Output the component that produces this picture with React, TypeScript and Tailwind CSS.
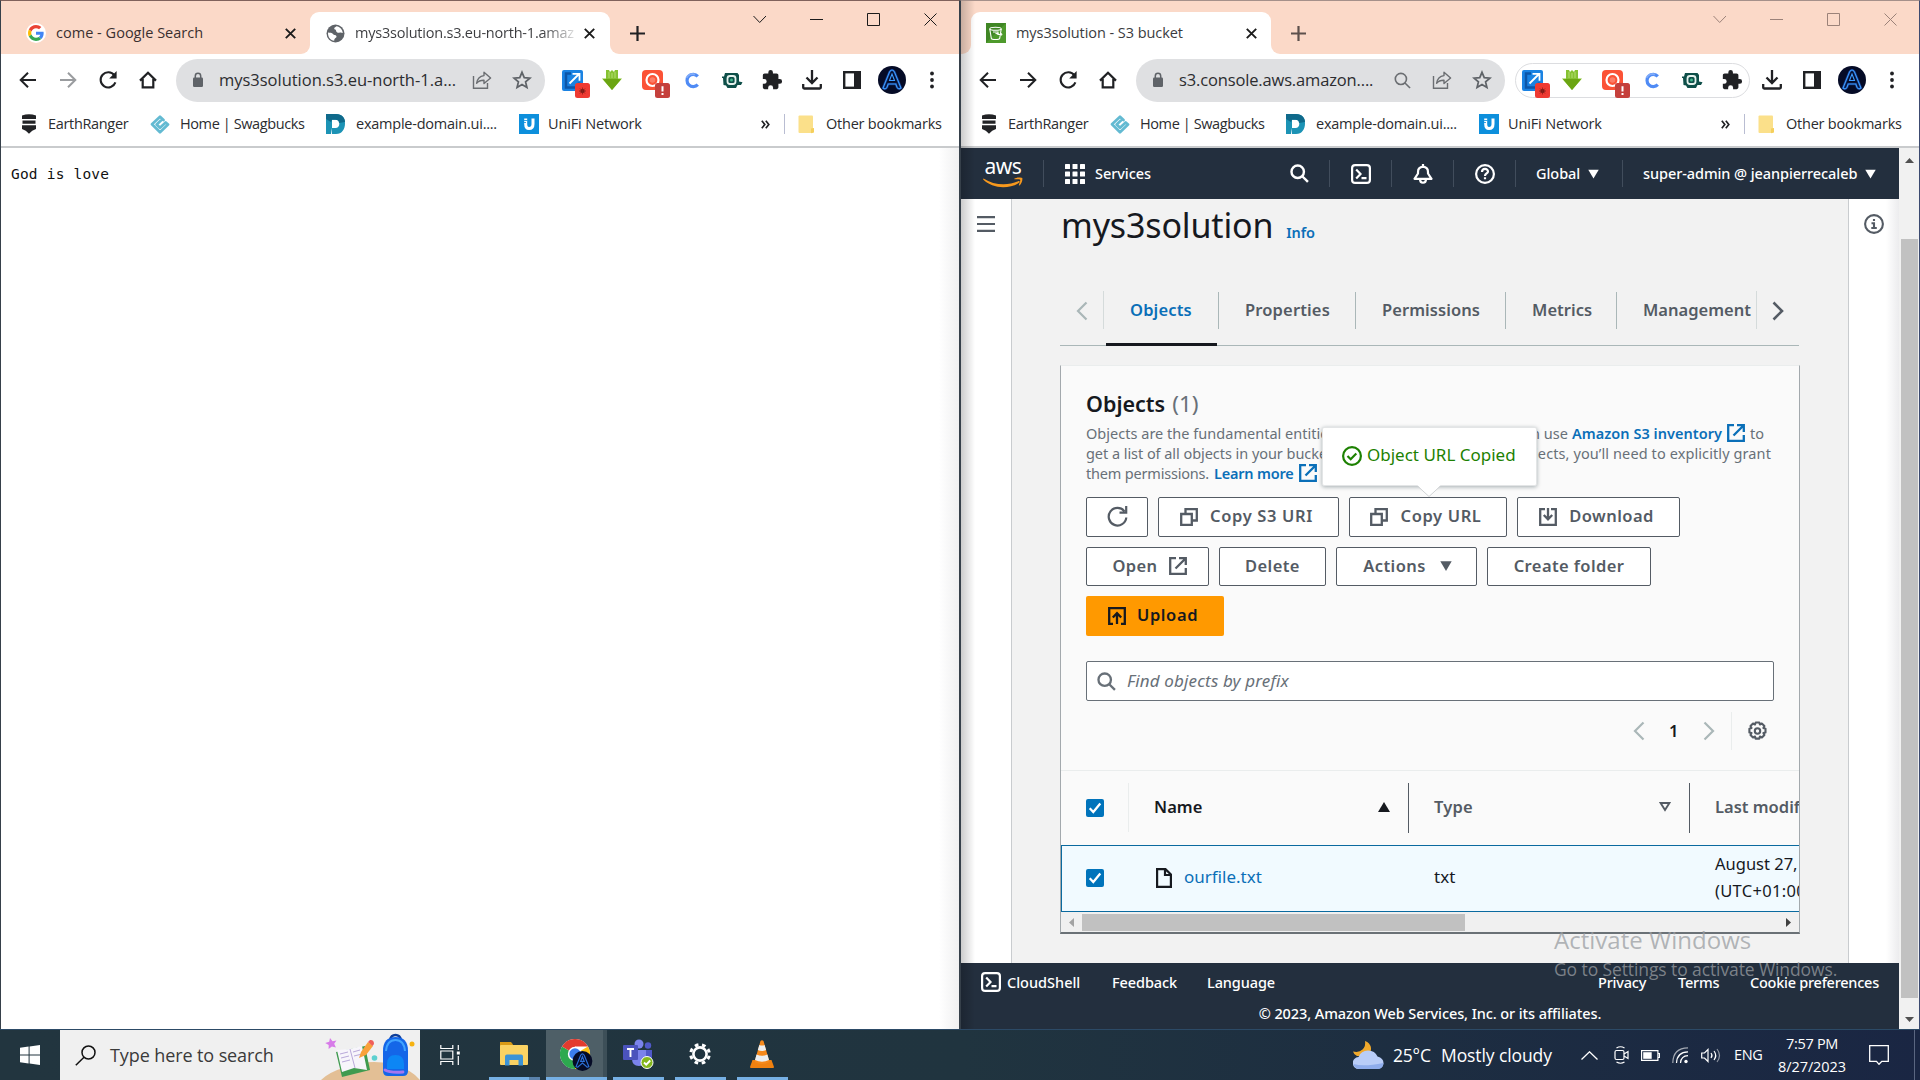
import React from 'react';

type P = { className?: string };

/* ---------- Browser icons ---------- */
const Arrow = ({ className = '', flip = false }: P & { flip?: boolean }) => (
  <svg width="18" height="18" viewBox="0 0 18 18" className={`${className} ${flip ? 'rotate-180' : ''}`} fill="none" stroke="currentColor" strokeWidth="2">
    <path d="M17 9H2M9 1.7 1.7 9 9 16.3" />
  </svg>
);
const Reload = () => (
  <svg width="20" height="20" viewBox="0 0 20 20" fill="none" stroke="#202124" strokeWidth="2.1">
    <path d="M16.4 5.4A7.6 7.6 0 1 0 17.4 12.4" />
    <path d="M18.6 1v7.4h-7.4z" fill="#202124" stroke="none" />
  </svg>
);
const Home = () => (
  <svg width="18" height="18" viewBox="0 0 18 18" fill="none" stroke="#202124" strokeWidth="2.2">
    <path d="M1 9.6 9 1.8l8 7.8M3.7 8v8.4h10.6V8" />
  </svg>
);
const Lock = () => (
  <svg width="12" height="16" viewBox="0 0 12 16">
    <rect x="1" y="5.5" width="10" height="9.5" rx="1.2" fill="#5f6368" />
    <path d="M3.3 6V4a2.7 2.7 0 0 1 5.4 0v2" fill="none" stroke="#5f6368" strokeWidth="1.5" />
  </svg>
);
const Share = () => (
  <svg width="20" height="20" viewBox="0 0 20 20" fill="none" stroke="#6b6e72" strokeWidth="1.4">
    <path d="M1.5 6v12.3h14V13" />
    <path d="M12 2.2 18.6 8 12 13.5v-3.3c-3.5-.1-5.7.9-7.4 3.1.6-4.2 3-7.1 7.4-7.7z" strokeLinejoin="round" />
  </svg>
);
const Star = () => (
  <svg width="20" height="20" viewBox="0 0 24 24" fill="none" stroke="#5f6368" strokeWidth="2.1">
    <path d="m12 2.800 2.700 6.300 6.800.6-5.200 4.500 1.600 6.700L12 17.300l-5.900 3.600 1.600-6.700L2.500 9.700l6.800-.6z" />
  </svg>
);
const Magnifier = ({ size, color, sw }: { size: number; color: string; sw: number }) => (
  <svg width={size} height={size} viewBox="0 0 18 18" fill="none" stroke={color} strokeWidth={sw}>
    <circle cx="7.3" cy="7.3" r="5.9" />
    <path d="m11.600 11.600 5.400 5.400" />
  </svg>
);
const ExtCapture = () => (
  <svg width="28" height="28" viewBox="0 0 28 28">
    <rect width="21" height="21" rx="2" fill="#1a82e2" />
    <path d="M9 3.500H4v14h13v-5" fill="none" stroke="#0d56a8" strokeWidth="2.5" />
    <path d="M7.500 13.500 16.500 4.500M10.500 3.800h7v7" fill="none" stroke="#fff" strokeWidth="1.8" />
    <rect x="13" y="13" width="15" height="15" rx="2.5" fill="#ee3a32" />
    <circle cx="20.5" cy="21" r="2" fill="#6a1512" />
    <path d="M17 21h7M20.500 17.500v7M18 18.500l5 5M23 18.500l-5 5" stroke="#8b1f1a" strokeWidth=".8" />
  </svg>
);
const ExtGreen = () => (
  <svg width="20" height="20" viewBox="0 0 20 20">
    <path d="M4 0h3l1 2 2-2 2 2 1-2h3v8.500h4L10 20 0 8.500h4z" fill="#86c232" />
    <path d="M4 9h12l3 .2L10 20 1 9.200z" fill="#6ba512" />
    <path d="M7 2v6M10 3v5M13 2v6" stroke="#b3dc72" strokeWidth="1" />
  </svg>
);
const ExtRed = () => (
  <svg width="28" height="28" viewBox="0 0 28 28">
    <rect width="21" height="20" rx="4" fill="#fb5236" />
    <circle cx="10.5" cy="10" r="6" fill="none" stroke="#fff" strokeWidth="2.2" />
    <circle cx="10.5" cy="10" r="2.8" fill="#fff" opacity=".25" />
    <rect x="13" y="13" width="15" height="15" rx="2.5" fill="#c5403c" />
    <path d="M20.500 16.300v5.200M20.500 23v2" stroke="#fff" strokeWidth="2" />
  </svg>
);
const ExtC = () => (
  <svg width="16" height="17" viewBox="0 0 16 17" fill="none" strokeWidth="3.2">
    <path d="M13.800 4.300A6.200 6.200 0 1 0 13.800 12.700" stroke="#4f8bf5" />
    <path d="M11 2.600A6.200 6.200 0 0 0 2.500 6" stroke="#7faaf8" strokeWidth="2" />
  </svg>
);
const ExtTeal = () => (
  <svg width="21" height="17" viewBox="0 0 21 17">
    <path d="M3 1h12.500l1.500 2v6.500l3.500.8L19 13h-3.500L14 16H5.500L4 13.500 1.500 13 1 6H0V4.500h2z" fill="#0e4f49" />
    <rect x="5.500" y="4" width="8" height="8" rx="2.5" fill="none" stroke="#e6f3ee" strokeWidth="1.8" />
    <circle cx="9.5" cy="8" r="1.5" fill="#3fb68b" />
  </svg>
);
const Puzzle = () => (
  <svg width="22" height="22" viewBox="0 0 24 24" fill="#202124">
    <path d="M20.500 11H19V7c0-1.100-.9-2-2-2h-4V3.500a2.500 2.500 0 0 0-5 0V5H4c-1.100 0-2 .9-2 2v3.800h1.500a2.700 2.700 0 0 1 0 5.400H2V20c0 1.100.9 2 2 2h3.800v-1.500a2.700 2.700 0 0 1 5.400 0V22H17c1.100 0 2-.9 2-2v-4h1.500a2.500 2.500 0 0 0 0-5z" />
  </svg>
);
const DownloadTray = () => (
  <svg width="20" height="20" viewBox="0 0 20 20" fill="none" stroke="#202124" strokeWidth="2.3">
    <path d="M10 0v12.500M4.500 7.500 10 13l5.500-5.500M1.200 14v3.500c0 .6.4 1 1 1h15.600c.6 0 1-.4 1-1V14" />
  </svg>
);
const SidePanel = () => (
  <svg width="18" height="18" viewBox="0 0 18 18">
    <rect x="1.2" y="1.2" width="15.6" height="15.6" fill="#fff" stroke="#202124" strokeWidth="2.4" />
    <rect x="11" y="1" width="6" height="16" fill="#202124" />
  </svg>
);
const Avatar = ({ size }: { size: number }) => (
  <svg width={size} height={size} viewBox="0 0 28 28">
    <circle cx="14" cy="14" r="14" fill="#050b26" />
    <path d="M5 22 11.500 6q2.500-4 5 0L23 22q-2.500 2-4-.8L17.800 18h-7.600L9 21.200Q7.500 24 5 22z" fill="none" stroke="#1747a8" strokeWidth="2.6" opacity=".6" />
    <path d="M5 22 11.500 6q2.500-4 5 0L23 22q-2.500 2-4-.8L17.800 18h-7.600L9 21.200Q7.500 24 5 22zM11.500 14.500h5L14 8z" fill="none" stroke="#3d9bff" strokeWidth="1.1" />
  </svg>
);
const Dots = () => (
  <svg width="4" height="18" viewBox="0 0 4 18" fill="#202124">
    <circle cx="2" cy="2.5" r="1.9" />
    <circle cx="2" cy="9" r="1.9" />
    <circle cx="2" cy="15.5" r="1.9" />
  </svg>
);
const Cross = () => (
  <svg width="11" height="11" viewBox="0 0 11 11" stroke="#1b1b1b" strokeWidth="1.9" className="shrink-0">
    <path d="m.8.8 9.400 9.400M10.200.8.8 10.200" />
  </svg>
);
const Plus = ({ color }: { color: string }) => (
  <svg width="15" height="15" viewBox="0 0 15 15" stroke={color} strokeWidth="2.2">
    <path d="M7.500 0v15M0 7.500h15" />
  </svg>
);
const GoogleG = () => (
  <span className="flex h-5 w-5 shrink-0 items-center justify-center rounded-full bg-white">
    <svg width="16" height="16" viewBox="0 0 48 48">
      <path fill="#EA4335" d="M24 9.500c3.540 0 6.710 1.220 9.210 3.600l6.850-6.850C35.900 2.380 30.470 0 24 0 14.620 0 6.510 5.380 2.560 13.220l7.980 6.190C12.430 13.720 17.740 9.500 24 9.500z" />
      <path fill="#4285F4" d="M46.980 24.550c0-1.570-.15-3.090-.38-4.550H24v9.020h12.940c-.58 2.960-2.260 5.480-4.780 7.180l7.730 6c4.510-4.180 7.090-10.360 7.090-17.650z" />
      <path fill="#FBBC05" d="M10.530 28.590c-.48-1.450-.76-2.990-.76-4.590s.27-3.140.76-4.590l-7.980-6.190C.92 16.460 0 20.120 0 24c0 3.880.92 7.540 2.560 10.780l7.970-6.190z" />
      <path fill="#34A853" d="M24 48c6.480 0 11.930-2.130 15.890-5.810l-7.730-6c-2.150 1.450-4.920 2.300-8.160 2.300-6.260 0-11.570-4.220-13.470-9.910l-7.980 6.190C6.510 42.620 14.620 48 24 48z" />
    </svg>
  </span>
);
const Globe = () => (
  <svg width="19" height="19" viewBox="0 0 19 19" className="shrink-0">
    <circle cx="9.5" cy="9.5" r="9" fill="#5f6368" />
    <path d="M2 8.500c2 .2 4 .2 5 1.500.9 1.300 3.400.8 3.500 2.500.1 1.500-2.200 1.300-2.300 4.300C4.500 16.300 1.800 13.500 2 8.500z" fill="#fff" />
    <path d="M10.500 2.200c-.7.8-2.300.9-2.300 2.200 0 1.300 1.800.8 1.800 2 0 1.500 2 2.600 3.200 2.300 1.500-.4 2.500-.2 3.600.3-.3-3.600-2.800-6.300-6.300-6.800z" fill="#fff" />
  </svg>
);
const BucketIcon = () => (
  <svg width="20" height="20" viewBox="0 0 20 20" className="shrink-0">
    <rect width="20" height="20" fill="#3f8624" />
    <path d="M0 20 20 0v20z" fill="#4e9a2c" />
    <g fill="none" stroke="#fff" strokeWidth="1.1">
      <ellipse cx="9.5" cy="5.7" rx="5.7" ry="1.5" />
      <path d="m3.800 6 1.500 9.300c.3 1.600 8.100 1.600 8.400 0L15.200 6M9.500 10.200l5.500 1.800c1 .3 1.300-1 0-1.500M7 9h5v3" />
    </g>
  </svg>
);

/* ---------- Bookmark icons ---------- */
const RangerIcon = () => (
  <svg width="16" height="20" viewBox="0 0 16 20" fill="#222326">
    <path d="M1 1.500Q8-.8 15 1.500V5H1zM1.500 6.500h13v3.300h-13zM1 11.300h14V15q-4 1-7 4.800Q5 16 1 15z" />
  </svg>
);
const SwagIcon = () => (
  <svg width="20" height="19" viewBox="0 0 20 19" fill="none" stroke="#63bad2" strokeWidth="2.7" strokeLinejoin="round" strokeLinecap="round">
    <path d="M13.500 5 10 1.700 2 9.200l8 8 8-7.700-2.300-2-5.700 5.300-3.300-3.300 5-4.700" />
  </svg>
);
const DIcon = () => (
  <svg width="19" height="20" viewBox="0 0 19 20">
    <path d="M0 0h10c6 0 9 4 9 9.500S16 20 10 20H6v-6h3.500c2.500 0 3.800-1.500 3.800-4.200S12 5.800 9.500 5.800H6V14l-1 6H0z" fill="#1c93b5" />
    <path d="M0 0h10c6 0 9 4 9 8l-6 1c0-2-1.300-3.200-3.500-3.200H6L5 8 0 5z" fill="#0f6a8b" />
  </svg>
);
const UIcon = () => (
  <svg width="20" height="20" viewBox="0 0 20 20">
    <rect width="20" height="20" fill="#0d8fdc" />
    <path d="M6.700 4.500V10c0 3 1 4.500 3.300 4.500s4-1.300 4-4.500V4.500" fill="none" stroke="#fff" strokeWidth="3" />
    <path d="M4.500 6.500h4M4.500 8.500h2.500" stroke="#0d8fdc" strokeWidth=".8" />
  </svg>
);
const FolderNote = () => (
  <svg width="17" height="19" viewBox="0 0 17 19">
    <rect x=".5" y=".5" width="14.5" height="17.5" rx="1" fill="#fbe08a" />
    <path d="M13 13.500 16 13v4.500l-3 .8z" fill="#f5cf5c" />
  </svg>
);

const Cell = ({ children }: { children?: React.ReactNode }) => (
  <div className="flex h-10 w-10 shrink-0 items-center justify-center">{children}</div>
);

const WindowControls = ({ color }: { color: string }) => (
  <div className="flex h-[37px] shrink-0 self-start">
    {['m.5 3 6.200 6.500L13 3', 'M0 6.500h13', 'M.5.5h12v12H.5z', 'm.5.5 12 12M12.500.5l-12 12'].map((d, i) => (
      <div key={i} className="flex h-full w-[57px] items-center justify-center">
        <svg width="13" height="13" viewBox="0 0 13 13" fill="none" stroke={color} strokeWidth="1">
          <path d={d} />
        </svg>
      </div>
    ))}
  </div>
);

const CurveLeft = ({ w }: { w: string }) => (
  <div className={`h-[9px] shrink-0 bg-white ${w}`}>
    <div className="h-full w-full rounded-br-[9px] bg-[#fbd9c8]" />
  </div>
);
const CurveRight = () => (
  <div className="h-[9px] w-[9px] shrink-0 bg-white">
    <div className="h-full w-full rounded-bl-[9px] bg-[#fbd9c8]" />
  </div>
);

function Toolbar({ url, urlClass, grouped = false, canForward = false }: { url: string; urlClass: string; grouped?: boolean; canForward?: boolean }) {
  return (
    <div className="flex h-[53px] items-center bg-white pb-px pl-[7px]">
      <Cell><Arrow className="text-[#202124]" /></Cell>
      <Cell><Arrow flip className={canForward ? 'text-[#202124]' : 'text-[#9a9c9f]'} /></Cell>
      <Cell><Reload /></Cell>
      <Cell><Home /></Cell>
      <div className="ml-[8px] flex h-[43px] w-[369px] shrink-0 items-center rounded-full bg-[#dfe0e2] pl-4 pr-[3px]">
        <Lock />
        <span className={`ml-[15px] flex-1 whitespace-nowrap text-[16.500px] text-[#2c2d30] ${urlClass}`}>{url}</span>
        {grouped && <Cell><Magnifier size={17} color="#6b6e72" sw={1.7} /></Cell>}
        <Cell><Share /></Cell>
        <Cell><Star /></Cell>
      </div>
      <div className="relative ml-[7px] flex shrink-0">
        {grouped && <div className="absolute left-[3px] top-[3px] h-[35px] w-[235px] rounded-full border border-[#dcdde0]" />}
        <Cell><span className="relative left-[4px] top-[4px]"><ExtCapture /></span></Cell>
        <Cell><ExtGreen /></Cell>
        <Cell><span className="relative left-[4px] top-[4px]"><ExtRed /></span></Cell>
        <Cell><ExtC /></Cell>
        <Cell><ExtTeal /></Cell>
        <Cell><Puzzle /></Cell>
      </div>
      <Cell><DownloadTray /></Cell>
      <Cell><SidePanel /></Cell>
      <Cell><Avatar size={28} /></Cell>
      <Cell><Dots /></Cell>
    </div>
  );
}

function Bookmarks() {
  return (
    <div className="h-[41px] border-b-2 border-[#c9cbcd] bg-white">
      <div className="flex h-[34px] items-center whitespace-nowrap pl-5 text-[14.500px] text-[#2b2c2f]">
        <RangerIcon />
        <span className="ml-[11px] w-[102px] tracking-[-0.33px]">EarthRanger</span>
        <SwagIcon />
        <span className="ml-[10px] w-[146px] tracking-[-0.4px]">Home | Swagbucks</span>
        <DIcon />
        <span className="ml-[11px] w-[163px] tracking-[-0.23px]">example-domain.ui....</span>
        <UIcon />
        <span className="ml-[9px] w-[213px] tracking-[-0.15px]">UniFi Network</span>
        <svg width="9" height="9" viewBox="0 0 9 9" fill="none" stroke="#202124" strokeWidth="1.7">
          <path d="m.8.8 3 3.700-3 3.700M4.800.8l3 3.700-3 3.700" />
        </svg>
        <div className="ml-[14px] h-5 w-px bg-[#b9bdd2]" />
        <span className="ml-[13px]"><FolderNote /></span>
        <span className="ml-[11px] tracking-[-0.22px]">Other bookmarks</span>
      </div>
    </div>
  );
}

function TextWindow() {
  return (
    <section className="flex h-[1029px] w-[960px] shrink-0 flex-col border-l border-r border-t border-l-[#36404a] border-r-[#36404a] border-t-[#80625c] bg-white">
      <div className="flex h-[53px] items-end bg-[#fbd9c8]">
        <div className="flex h-[42px] w-[300px] shrink-0 items-center pl-[25px] pr-[5px]">
          <GoogleG />
          <span className="ml-[10px] flex-1 whitespace-nowrap text-[14.500px] text-[#3a3030] tracking-[0.02px]">come - Google Search</span>
          <Cross />
        </div>
        <CurveLeft w="w-[9px]" />
        <div className="flex h-[42px] w-[300px] shrink-0 items-center rounded-t-[9px] bg-white pl-4 pr-[15px]">
          <Globe />
          <span className="ml-[10px] w-[220px] overflow-hidden whitespace-nowrap bg-gradient-to-r from-[#3a3b3e] from-85% to-[#e4e4e4] bg-clip-text text-[14.500px] text-transparent tracking-[-0.22px]">mys3solution.s3.eu-north-1.amaz</span>
          <span className="ml-auto"><Cross /></span>
        </div>
        <CurveRight />
        <div className="flex h-[42px] flex-1 items-center pl-[11px]"><Plus color="#202124" /></div>
        <WindowControls color="#1b1b1b" />
      </div>
      <Toolbar url="mys3solution.s3.eu-north-1.a..." urlClass="tracking-[-0.02px]" />
      <Bookmarks />
      <div className="flex flex-1 justify-between">
        <pre className="pl-[10px] pt-[15px] font-['DejaVu_Sans_Mono',monospace] text-[14.500px] leading-[22px] tracking-[0.2px] text-[#111]">God is love</pre>
        <div className="w-5 bg-gradient-to-l from-[#f0f0f1] to-white" />
      </div>
    </section>
  );
}

/* ---------- AWS console ---------- */
const CloudShellIcon = () => (
  <svg width="20" height="20" viewBox="0 0 20 20" fill="none" stroke="#fff" strokeWidth="2.2">
    <rect x="1.1" y="1.1" width="17.8" height="17.8" rx="3" />
    <path d="m5.200 5.500 4.300 4.500-4.300 4.500M10.500 14.200h5" />
  </svg>
);
const External = ({ color }: { color: string }) => (
  <svg width="18" height="18" viewBox="0 0 18 18" fill="none" stroke={color} strokeWidth="2.3" className="shrink-0">
    <path d="M7 1.200H1.200v15.600h15.600V11M10 1.200h6.800V8M16.500 1.500l-10 10" />
  </svg>
);
const CopyIcon = () => (
  <svg width="18" height="18" viewBox="0 0 18 18" fill="none" stroke="#545b64" strokeWidth="2.3" className="shrink-0">
    <path d="M1.200 6h10.600v10.800H1.200z" />
    <path d="M5.500 6V1.200h11.300v11.300H12" />
  </svg>
);
const Caret = ({ color, w = 12 }: { color: string; w?: number }) => (
  <svg width={w} height="10" viewBox="0 0 12 10" fill={color}><path d="M.3.3h11.400L6 10z" /></svg>
);
const Chevron = ({ color, flip = false, sw = 2.2 }: { color: string; flip?: boolean; sw?: number }) => (
  <svg width="12" height="20" viewBox="0 0 12 20" fill="none" stroke={color} strokeWidth={sw} className={flip ? 'rotate-180' : ''}>
    <path d="m1.500 1.500 8.500 8.500-8.500 8.500" />
  </svg>
);
const Checkbox = () => (
  <svg width="18" height="18" viewBox="0 0 18 18" className="shrink-0">
    <rect width="18" height="18" rx="2" fill="#0073bb" />
    <path d="m3.700 9.300 3.600 3.700 7-8.500" fill="none" stroke="#fff" strokeWidth="2.3" />
  </svg>
);

const Btn = ({ w, h = 'h-10', pad = '', children }: { w: string; h?: string; pad?: string; children: React.ReactNode }) => (
  <button className={`flex shrink-0 items-center justify-center whitespace-nowrap rounded-[2px] border border-[#545b64] bg-white pb-px text-[16.500px] font-semibold text-[#545b64] ${w} ${h} ${pad}`}>
    {children}
  </button>
);

function AwsNav() {
  return (
    <nav className="flex h-[51px] shrink-0 items-center whitespace-nowrap bg-[#232f3e] text-[14.500px] font-medium text-white">
      <div className="flex h-[27px] w-[83px] items-center border-r border-[#414d5c] pl-[22px]">
        <div className="flex w-10 flex-col items-center">
          <span className="h-[17px] text-[21px] font-normal leading-[13px] tracking-[-0.5px]">aws</span>
          <svg width="40" height="11" viewBox="0 0 40 11">
            <path d="M.5 1.500C11 8.500 25 8.800 35 4.300c1.500-.7 2.500.5 1 1.500C26 12.500 9 11.800 0 2.300z" fill="#f7981d" />
            <path d="M31.500 1.600C34 0 38 .2 39.300.9 39.800 3 38.500 6.800 36.500 8.400c-.5.300-.8 0-.6-.5.800-1.900 1.700-4.500 1.200-5.200-.6-.7-3.300-.6-5-.4-.8.1-1-.4-.6-.7z" fill="#f7981d" />
          </svg>
        </div>
      </div>
      <svg width="20" height="20" viewBox="0 0 20 20" fill="#fff" className="ml-[21px]">
        {[0, 7.5, 15].map((y) => [0, 7.5, 15].map((x) => <rect key={`${x}-${y}`} x={x} y={y} width="5" height="5" rx=".5" />))}
      </svg>
      <span className="ml-[10px] tracking-[-0.05px]">Services</span>
      <div className="ml-auto flex h-[27px] items-center">
        <div className="flex h-full w-[62px] items-center justify-center border-r border-[#414d5c] pl-px"><Magnifier size={19} color="#fff" sw={2.3} /></div>
        <div className="flex h-full w-[62px] items-center justify-center border-r border-[#414d5c]"><CloudShellIcon /></div>
        <div className="flex h-full w-[62px] items-center justify-center border-r border-[#414d5c]">
          <svg width="20" height="20" viewBox="0 0 20 20" fill="none" stroke="#fff" strokeWidth="2.2">
            <path d="M1.500 14.800 5 9.500V8q0-4.800 5-5.300Q15 3.200 15 8v1.500l3.500 5.300z" strokeLinejoin="round" />
            <path d="M10 0v3M7 15c0 5 6 5 6 0" />
          </svg>
        </div>
        <div className="flex h-full w-[62px] items-center justify-center border-r border-[#414d5c]">
          <svg width="20" height="20" viewBox="0 0 20 20" fill="none" stroke="#fff" strokeWidth="2.2">
            <circle cx="10" cy="10" r="8.9" />
            <path d="M7 8c0-4 6-4 6-.5 0 2-3 2-3 4.500M10 13.300v2" />
          </svg>
        </div>
        <div className="flex h-full w-[107px] items-center border-r border-[#414d5c] pl-[20px]">
          <span className="w-[52px] tracking-[-0.05px]">Global</span><Caret color="#fff" w={11} />
        </div>
        <div className="flex h-full w-[276px] items-center pl-[20px]">
          <span className="w-[222px] tracking-[-0.08px]">super-admin @ jeanpierrecaleb</span><Caret color="#fff" w={11} />
        </div>
      </div>
    </nav>
  );
}

function Tabs() {
  return (
    <div className="mt-[25px] flex h-[71px] w-[739px] items-center border-b border-[#aab7b8] text-[16.500px] font-semibold text-[#545b64]">
      <div className="flex h-[38px] w-[44px] items-center border-r border-[#d5dbdb] pl-[16px] pt-px"><Chevron color="#aab7b8" flip /></div>
      <div className="relative flex h-[70px] w-[114px] items-center">
        <span className="ml-[26px] tracking-[0.15px] text-[#0a6fb8]">Objects</span>
        <span className="absolute -bottom-px left-[2px] h-[3px] w-[111px] bg-[#16191f]" />
      </div>
      <div className="flex h-[37px] w-[138px] items-center border-l border-r border-[#aab7b8] pl-[26px] tracking-[0.15px]">Properties</div>
      <div className="flex h-[37px] w-[150px] items-center border-r border-[#aab7b8] pl-[26px] tracking-[0.07px]">Permissions</div>
      <div className="flex h-[37px] w-[111px] items-center border-r border-[#aab7b8] pl-[26px] tracking-[0.05px]">Metrics</div>
      <div className="flex h-[37px] w-[139px] items-center pl-[26px]">Management</div>
      <div className="flex h-[38px] flex-1 items-center border-l border-[#d5dbdb] pl-[15px] pt-px"><Chevron color="#545b64" sw={2.6} /></div>
    </div>
  );
}

function ObjectsPanel() {
  return (
    <div className="mt-[19px] flex h-[569px] w-[740px] flex-col border border-b-2 border-[#a3a9ad] border-t-[#eaeded] border-b-[#6a7176] bg-[#fafafa]">
      <div className="flex flex-col pl-[25px] pr-[25px]">
        <h2 className="mt-[23px] flex h-[30px] items-baseline whitespace-nowrap text-[21.500px] font-semibold leading-[30px] text-[#16191f]">
          Objects<span className="ml-[7px] text-[22.500px] font-normal text-[#687078]">(1)</span>
        </h2>
        <div className="mt-[4px] whitespace-nowrap text-[14.500px] leading-5 text-[#687078]">
          <div className="flex h-5 items-center">
            <span className="w-[486px] tracking-[0.02px]">Objects are the fundamental entities stored in Amazon S3. You can use</span>
            <span className="mr-[5px] font-semibold tracking-[0.04px] text-[#0a6fb8]">Amazon S3 inventory</span>
            <External color="#0a6fb8" />
            <span className="ml-[5px]">to</span>
          </div>
          <div className="flex h-5 items-center justify-between">
            <span className="tracking-[-0.05px]">get a list of all objects in your bucket. For others to access your</span>
            <span className="mr-[3px] tracking-[0.1px]">objects, you’ll need to explicitly grant</span>
          </div>
          <div className="flex h-5 items-center">
            <span className="w-[128px] tracking-[-0.19px]">them permissions.</span>
            <span className="mr-[5px] font-semibold tracking-[-0.2px] text-[#0a6fb8]">Learn more</span>
            <External color="#0a6fb8" />
          </div>
        </div>
        <div className="relative mt-[14px] flex gap-[10px]">
          <Btn w="w-[62px]">
            <svg width="21" height="21" viewBox="0 0 21 21" fill="none" stroke="#545b64" strokeWidth="2.2"><path d="M17.500 5.300A8.800 8.800 0 1 0 19.300 11.500M19.200 0v6.700h-6.700" /></svg>
          </Btn>
          <Btn w="w-[181px]" pad="pr-[4px]"><CopyIcon /><span className="ml-3 tracking-[0.65px]">Copy S3 URI</span></Btn>
          <Btn w="w-[158px]" pad="pr-[4px]"><CopyIcon /><span className="ml-3 tracking-[0.63px]">Copy URL</span></Btn>
          <Btn w="w-[163px]" pad="pr-[4px]">
            <svg width="18" height="18" viewBox="0 0 18 18" fill="none" stroke="#545b64" strokeWidth="2.3"><path d="M6 1.200H1.200v15.600h15.600V1.200H12M9 0v11M4.800 7 9 11.300 13.200 7" /></svg>
            <span className="ml-3 tracking-[0.45px]">Download</span>
          </Btn>
          <div className="absolute -top-[70px] left-[236px] z-10 flex h-[59px] w-[215px] items-center rounded-[2px] border border-[#e3e5e6] bg-white pb-[3px] pl-[19px] text-[17px] text-[#1d8102] shadow-[0_1px_4px_rgba(0,28,36,0.35)]">
            <svg width="20" height="20" viewBox="0 0 20 20" fill="none" stroke="#1d8102" strokeWidth="2.2" className="relative top-px"><circle cx="10" cy="10" r="8.9" /><path d="m5.500 10 3.200 3.200L14.300 7.500" /></svg>
            <span className="ml-[5px] whitespace-nowrap">Object URL Copied</span>
            <svg width="24" height="12" viewBox="0 0 24 12" className="absolute left-[94px] top-[57px]"><path d="M0 0h24L12 11.300z" fill="#fff" /><path d="m.5 1 11.500 10.500L23.500 1" fill="none" stroke="#d0d3d5" /></svg>
          </div>
        </div>
        <div className="mt-[10px] flex gap-[10px]">
          <Btn w="w-[123px]" h="h-[39px]" pad="pl-[4px]"><span className="mr-[11px] tracking-[0.4px]">Open</span><External color="#545b64" /></Btn>
          <Btn w="w-[107px]" h="h-[39px]"><span className="tracking-[0.4px]">Delete</span></Btn>
          <Btn w="w-[141px]" h="h-[39px]" pad="pl-[2px]"><span className="mr-[14px] tracking-[0.4px]">Actions</span><Caret color="#545b64" /></Btn>
          <Btn w="w-[164px]" h="h-[39px]"><span className="tracking-[0.4px]">Create folder</span></Btn>
        </div>
        <button className="mt-[10px] flex h-10 w-[138px] items-center rounded-[2px] bg-[#ff9900] pb-px pl-[22px] text-[16.500px] font-semibold text-[#16191f]">
          <svg width="18" height="18" viewBox="0 0 18 18" fill="none" stroke="#16191f" strokeWidth="2.3"><path d="M5 16.800H1.200V1.200h15.600v15.600H13M9 17V6.500M4.800 10.500 9 6.200l4.200 4.300" /></svg>
          <span className="ml-[11px] tracking-[0.6px]">Upload</span>
        </button>
        <div className="mt-[25px] flex h-10 w-[688px] items-center rounded-[2px] border border-[#687078] bg-white pl-[10px] text-[#687078]">
          <Magnifier size={19} color="#687078" sw={2.2} />
          <span className="ml-[11px] text-[17px] italic leading-5 tracking-[0.15px]">Find objects by prefix</span>
        </div>
        <div className="flex h-[60px] items-center justify-end">
          <Chevron color="#aab7b8" flip />
          <span className="ml-[24px] w-[34px] text-[16.500px] font-semibold leading-5 text-[#16191f]">1</span>
          <Chevron color="#aab7b8" />
          <div className="ml-4 h-[38px] w-px bg-[#eaeded]" />
          <svg width="21" height="21" viewBox="0 0 21 21" fill="none" stroke="#545b64" strokeWidth="2.1" className="ml-[15px] mr-[6px]">
            <path d="M8.700 1.500h3.600l.6 2 1.900-1 2.600 2.500-1 2 2.100.7v3.700l-2.100.6 1 2-2.500 2.500-2-1-.6 2.100H8.600l-.6-2.100-2 1-2.500-2.500 1-2-2.100-.6V7.700l2.100-.7-1-2L6 2.500l2 1z" strokeLinejoin="round" />
            <circle cx="10.5" cy="10" r="2.7" />
          </svg>
        </div>
      </div>
      <div className="mt-[9px] overflow-hidden whitespace-nowrap text-[16.500px]">
        <div className="flex h-[75px] w-[1000px] items-center border-t border-[#eaeded] pb-px font-semibold text-[#545b64]">
          <div className="flex h-[49px] w-[68px] items-center border-r border-[#eaeded] pl-[25px]"><Checkbox /></div>
          <div className="flex h-[50px] w-[280px] items-center justify-between border-r border-[#545b64] pb-px pl-[25px] pr-[18px] text-[#16191f]">
            <span className="tracking-[0.05px]">Name</span>
            <svg width="12" height="10" viewBox="0 0 12 10" fill="#16191f"><path d="M0 10h12L6 0z" /></svg>
          </div>
          <div className="flex h-[50px] w-[281px] items-center justify-between border-r border-[#545b64] pb-px pl-[25px] pr-[18px]">
            <span className="tracking-[0.2px]">Type</span>
            <svg width="12" height="10" viewBox="0 0 12 10" fill="none" stroke="#545b64" strokeWidth="1.9"><path d="M1.600 1h8.800L6 8z" /></svg>
          </div>
          <span className="pb-px pl-[25px]">Last modified</span>
        </div>
        <div className="flex h-[67px] w-[1000px] items-center border border-[#0a6a9f] bg-[#f1faff] text-[#16191f]">
          <div className="w-[92px] pb-px pl-6"><Checkbox /></div>
          <svg width="16" height="20" viewBox="0 0 16 20" fill="none" stroke="#16191f" strokeWidth="2.2" className="relative -top-px ml-[2px]"><path d="M1.100 1.100h8.400L14.900 6.500v12.400H1.100zM9 1v6h6" /></svg>
          <span className="ml-[12px] w-[250px] pb-[3px] text-[17px] text-[#0a6fb8]">ourfile.txt</span>
          <span className="w-[281px] pb-[3px] text-[17px]">txt</span>
          <span className="pb-[3px] leading-[27px]">August 27, 2023, 19:57:11<br /><span className="tracking-[0.3px]">(UTC+01:00)</span></span>
        </div>
      </div>
      <div className="flex h-5 items-center bg-[#f0f0f0] pl-2">
        <svg width="5" height="9" viewBox="0 0 5 9" fill="#a3a3a3"><path d="M5 0v9L0 4.500z" /></svg>
        <div className="ml-2 h-[17px] w-[383px] bg-[#c1c1c1]" />
        <svg width="5" height="9" viewBox="0 0 5 9" fill="#404040" className="ml-auto mr-2"><path d="M0 0v9l5-4.500z" /></svg>
      </div>
    </div>
  );
}

function AwsFooter() {
  return (
    <footer className="flex h-[66px] shrink-0 flex-col whitespace-nowrap bg-[#232f3e] text-[14.500px] font-medium text-white">
      <div className="flex h-[38px] items-center pl-5 pr-5">
        <CloudShellIcon />
        <span className="ml-[6px] w-[105px] pt-px">CloudShell</span>
        <span className="w-[95px] pt-px tracking-[-0.1px]">Feedback</span>
        <span className="pt-px tracking-[-0.1px]">Language</span>
        <span className="ml-auto w-[80px] pt-px tracking-[-0.2px]">Privacy</span>
        <span className="w-[72px] pt-px tracking-[-0.2px]">Terms</span>
        <span className="w-[129px] pt-px tracking-[-0.25px]">Cookie preferences</span>
      </div>
      <div className="h-6 text-center leading-6 tracking-[-0.09px]">© 2023, Amazon Web Services, Inc. or its affiliates.</div>
    </footer>
  );
}

function ConsoleWindow() {
  return (
    <section className="relative flex h-[1029px] w-[960px] shrink-0 flex-col border-l border-r border-t border-l-[#36404a] border-r-[#3c4a70] border-t-[#a5908a] bg-white">
      <div className="flex h-[53px] items-end bg-[#fbd9c8]">
        <CurveLeft w="w-[10px]" />
        <div className="flex h-[42px] w-[300px] shrink-0 items-center rounded-t-[9px] bg-white pl-[15px] pr-[14px]">
          <BucketIcon />
          <span className="ml-[10px] flex-1 whitespace-nowrap text-[14.500px] text-[#3a3b3e] tracking-[-0.06px]">mys3solution - S3 bucket</span>
          <Cross />
        </div>
        <CurveRight />
        <div className="flex h-[42px] flex-1 items-center pl-[11px]"><Plus color="#5d504c" /></div>
        <WindowControls color="#9b8279" />
      </div>
      <Toolbar url="s3.console.aws.amazon...." urlClass="tracking-[-0.15px]" grouped canForward />
      <Bookmarks />
      <div className="flex min-h-0 flex-1">
        <div className="flex w-[938px] flex-col font-['Noto_Sans',sans-serif]">
          <AwsNav />
          <div className="flex min-h-0 flex-1">
            <div className="w-[51px] border-r border-[#c9cccf] bg-white pl-4 pt-[17px]">
              <svg width="18" height="16" viewBox="0 0 18 16" stroke="#545b64" strokeWidth="2.2"><path d="M0 1.100h18M0 8h18M0 14.900h18" /></svg>
            </div>
            <main className="w-[836px] bg-[#f2f2f2] pl-[48px]">
              <h1 className="ml-px flex h-[51px] items-baseline whitespace-nowrap text-[34px] leading-[53px] tracking-[-0.15px] text-[#16191f]">
                mys3solution
                <span className="ml-[13px] text-[14.500px] font-semibold tracking-[-0.1px] text-[#0a6fb8]">Info</span>
              </h1>
              <Tabs />
              <ObjectsPanel />
            </main>
            <div className="flex flex-1 justify-between border-l border-[#c9cccf] bg-white pl-[15px]">
              <svg width="20" height="20" viewBox="0 0 20 20" fill="none" stroke="#545b64" strokeWidth="2.100" className="mt-[15px]">
                <circle cx="10" cy="10" r="8.9" /><path d="M10 5v2M7.500 9.300H10V14M7.300 14h5.500" />
              </svg>
              <div className="w-[13px] bg-gradient-to-l from-[#ececee] to-white" />
            </div>
          </div>
          <AwsFooter />
        </div>
        <div className="flex flex-1 flex-col items-center bg-[#f1f1f1] pt-[10px]">
          <svg width="9" height="5" viewBox="0 0 9 5" fill="#505050"><path d="M0 5h9L4.500 0z" /></svg>
          <div className="mt-[76px] h-[759px] w-[17px] bg-[#c1c1c1]" />
          <svg width="9" height="5" viewBox="0 0 9 5" fill="#505050" className="mt-[19px]"><path d="M0 0h9L4.500 5z" /></svg>
        </div>
      </div>
      <div className="pointer-events-none absolute bottom-0 left-0 top-0 w-[14px] bg-gradient-to-r from-black/20 to-transparent" />
    </section>
  );
}

/* ---------- Taskbar ---------- */
const SearchArt = () => (
  <svg width="99" height="49" viewBox="0 0 99 49">
    <path d="M0 49Q8 41 25 36 48 28 70 33q20 5 29 16z" fill="#e3bf95" />
    <path d="m9 7 2.500 3.200 4-.7-2.300 3.300 1.700 3.800-4-1-3.300 2.500.1-4.200-3.500-2 4-1.200z" fill="#d77be8" />
    <path d="m15 21 6 25 28-7-5-24z" fill="#3f9b4f" />
    <path d="m16 19 5 22 12-4 13 2-5-24-13 3z" fill="#f7f5fb" />
    <path d="m29 18 5 19M19 23l8-2M20 27l8-2M21 31l8-2M32 21l7-2M33 25l8-2" stroke="#b9a9da" fill="none" />
    <path d="m38 27 2-6 7-10 5 4-7 9z" fill="#f9a13a" />
    <path d="m47 11 2-2q4-.5 4 4l-1.500 2z" fill="#ef5f5a" />
    <circle cx="53.5" cy="27" r="2.8" fill="#5cd0d0" />
    <circle cx="91" cy="13" r="2.5" fill="#f6b211" />
    <path d="M69 9q1-5 5.500-5T80 9" fill="none" stroke="#0e3e9a" strokeWidth="2.5" />
    <path d="M62 20q0-14 12.500-14T87 20v20q0 5-5 5H67q-5 0-5-5z" fill="#1466e8" />
    <path d="M65 20q1-11 9.500-11T84 20" fill="none" stroke="#3fa3ff" strokeWidth="2" />
    <path d="M66 33q0-9 8.500-9t8.500 9v5H66z" fill="#0c86f5" />
    <path d="M64 39q5 3 18 2" fill="none" stroke="#a376f0" strokeWidth="2.8" strokeLinecap="round" />
  </svg>
);

const ChromeLogo = () => (
  <svg width="33" height="32" viewBox="0 0 33 32" className="relative left-[2px] top-px">
    <circle cx="15" cy="15" r="15" fill="#fff" />
    <path d="M15 15 28 7.500A15 15 0 0 1 15 30z" fill="#fbc116" />
    <path d="M15 15v15A15 15 0 0 1 2 7.500z" fill="#2da94f" />
    <path d="M2 7.500A15 15 0 0 1 28 7.500H15V15z" fill="#e33b2e" />
    <circle cx="15" cy="15" r="7.2" fill="#fff" />
    <circle cx="15" cy="15" r="5.7" fill="#3b7ded" />
    <g transform="translate(12.500 12) scale(.71)">
      <circle cx="14" cy="14" r="14" fill="#050b26" />
      <path d="M5 22 11.500 6q2.500-4 5 0L23 22q-2.500 2-4-.8L14 17l-5 4.200Q7.500 24 5 22zM11.500 14.500h5L14 8z" fill="none" stroke="#2c6fd6" strokeWidth="1.7" />
    </g>
  </svg>
);

function TaskItem({ w, bar = true, active = false, children }: { w: string; bar?: boolean; active?: boolean; children: React.ReactNode }) {
  return (
    <div className={`flex h-full shrink-0 flex-col ${w} ${active ? 'bg-[#4e5f67]' : ''}`}>
      <div className="flex flex-1 items-center justify-center">{children}</div>
      <div className={`h-[3px] ${bar ? 'bg-[#76b0e4]' : ''}`} />
    </div>
  );
}

function Taskbar() {
  return (
    <footer className="flex h-[51px] items-stretch whitespace-nowrap border-t border-[#2c4a66] bg-gradient-to-r from-[#22353f] via-[#20343f] to-[#1a2643] text-white">
      <div className="flex w-[60px] items-center justify-center">
        <svg width="20" height="20" viewBox="0 0 20 20" fill="#fff"><path d="M0 2.800 8.600 1.600v8H0zM9.600 1.500 20 0v9.600H9.600zM0 10.500h8.600v8L0 17.300zM9.600 10.500H20V20L9.600 18.600z" /></svg>
      </div>
      <div className="flex w-[360px] items-center bg-[#f0f0f0] pl-[15px]">
        <svg width="21" height="21" viewBox="0 0 21 21" fill="none" stroke="#111" strokeWidth="1.5"><circle cx="13.500" cy="7.500" r="6.500" /><path d="M9 12.300.8 20.300" /></svg>
        <span className="ml-[14px] flex-1 text-[18px] tracking-[-0.1px] text-[#3a3a3a]">Type here to search</span>
        <SearchArt />
      </div>
      <div className="flex w-[69px] items-center pl-5">
        <svg width="20" height="20" viewBox="0 0 20 20" fill="none" stroke="#fff" strokeWidth="1.2">
          <path d="M.8 0v3.500h12V0M.8 20v-3.500h12V20M.8 6h12v8H.8zM18.300 0v5M18.300 11v9" /><path d="M16.800 6.500h3v3h-3z" fill="#fff" stroke="none" />
        </svg>
      </div>
      <div className="flex w-[51px] flex-col">
        <div className="flex flex-1 items-center justify-center pr-[2px]">
          <svg width="28" height="24" viewBox="0 0 28 24"><path d="M0 0h11l2 2.500V8H0z" fill="#d99a16" /><rect y="3" width="28" height="20" rx="1" fill="#fad263" /><path d="M5 23.500V14.500q0-2 2-2h14q2 0 2 2v9h-4.500V18h-9v5.500z" fill="#3c93d6" /></svg>
        </div>
        <div className="flex h-[3px]"><div className="w-10 bg-[#76b0e4]" /><div className="w-[11px] bg-[#5a82ab]" /></div>
      </div>
      <div className="w-[6px]" />
      <TaskItem w="w-[57px]" active><ChromeLogo /></TaskItem>
      <div className="h-full w-[4px] border-b-[3px] border-[#76b0e4] bg-[#3d4f58]" />
      <div className="w-[6px]" />
      <TaskItem w="w-[51px]">
        <svg width="31" height="30" viewBox="0 0 31 30">
          <circle cx="16" cy="5" r="4.500" fill="#7b83eb" /><circle cx="25" cy="6.500" r="3.200" fill="#5059c9" />
          <path d="M20 11h9v9q0 5-5 5h-4z" fill="#5059c9" /><path d="M9 11h14v9q0 7-7 7t-7-7z" fill="#7b83eb" />
          <rect y="6" width="15" height="15" rx="1" fill="#4b53bc" /><path d="M4 10h7M7.500 10v8" stroke="#fff" strokeWidth="1.9" />
          <circle cx="24" cy="23.500" r="6" fill="#84b71c" stroke="#fff" /><path d="m21 23.500 2.200 2.200 4-4.200" fill="none" stroke="#fff" strokeWidth="1.9" />
        </svg>
      </TaskItem>
      <div className="w-[11px]" />
      <TaskItem w="w-[51px]">
        <svg width="22" height="22" viewBox="0 0 22 22" fill="none" stroke="#fff" className="relative -left-px">
          <circle cx="11" cy="11" r="6.600" strokeWidth="2.6" />
          <circle cx="11" cy="11" r="9.300" strokeWidth="3" strokeDasharray="3.650 3.650" strokeDashoffset="-1.800" />
        </svg>
      </TaskItem>
      <div className="w-[11px]" />
      <TaskItem w="w-[51px]">
        <svg width="26" height="28" viewBox="0 0 26 28" className="relative -left-px">
          <path d="M3.500 20h19L25 27q0 1-1 1H2q-1 0-1-1z" fill="#f08110" /><path d="M11.500 1q1.500-1.500 3 0l6 21q-7.500 4-15 0z" fill="#f6891a" />
          <path d="m10.300 5-1.500 5q4 2 8.300 0L15.600 5q-2.500 1-5.300 0zM7.500 14.500 6 20q7 3.500 14 0l-1.600-5.500q-5.500 2.500-10.900 0z" fill="#eceef0" />
        </svg>
      </TaskItem>
      <div className="ml-auto flex items-center">
        <svg width="31" height="29" viewBox="0 0 31 29">
          <path d="M12 0q5 1.500 6 7 .5 5-4 8H4Q1 14 0 10.500q6 1.500 9.500-2T12 0z" fill="#f0a92c" />
          <path d="M6 28a6 6 0 0 1-.5-12Q8 9.500 15 9.500t9.500 6Q30.500 17 30.500 22t-6 6z" fill="#b9cdf8" />
          <path d="M6 28a6 6 0 0 1-5.500-5q10 3 30-1-.5 6-6 6z" fill="#8fadec" />
        </svg>
        <span className="ml-[9px] w-[48px] text-[17.500px] tracking-[-0.2px]">25°C</span>
        <span className="w-[140px] text-[17.500px] tracking-[-0.1px]">Mostly cloudy</span>
        <svg width="17" height="9" viewBox="0 0 17 9" fill="none" stroke="#fff" strokeWidth="1.3"><path d="M.5 8.500 8.500.8l8 7.700" /></svg>
        <svg width="15" height="18" viewBox="0 0 15 18" fill="none" stroke="#fff" strokeWidth="1.2" className="ml-[16px]"><rect x="1" y="4.500" width="9" height="9" rx="1.500" /><path d="m10 8 4-2.500v7L10 10M2.500 2q4-2.500 8 0M2.500 16q4 2.500 8 0" /></svg>
        <svg width="19" height="11" viewBox="0 0 19 11" className="ml-[12px]"><path d="M.6.6h16.300v9.800H.6zM17 3.500h1.500v4H17" fill="none" stroke="#fff" strokeWidth="1.2" /><path d="M2.200 2.200h8.500v6.600H2.200z" fill="#fff" /></svg>
        <svg width="17" height="17" viewBox="0 0 17 17" fill="none" stroke="#fff" strokeWidth="1.2" className="ml-[12px]"><path d="M.8 16Q1 1 16 .8" opacity=".6" /><path d="M4.500 16Q5 5 16 4.800M8.500 16q.5-7 7.500-7.300" /><circle cx="14" cy="14.500" r="1.700" fill="#fff" stroke="none" /></svg>
        <svg width="21" height="15" viewBox="0 0 21 15" fill="none" stroke="#fff" strokeWidth="1.2" className="ml-[12px]"><path d="M.7 5h2.800L7 1.500v12L3.500 10H.7zM10 5q2 2.500 0 5M13 3q3.500 4.500 0 9" /><path d="M16 1q5 6.500 0 13" opacity=".5" /></svg>
        <span className="ml-[12px] w-[44px] text-[14.500px] tracking-[-0.3px]">ENG</span>
        <div className="w-[68px] text-center text-[14.500px] leading-[23px]">
          <div className="tracking-[-0.3px]">7:57 PM</div>
          <div className="tracking-[-0.1px]">8/27/2023</div>
        </div>
        <svg width="20" height="20" viewBox="0 0 20 20" fill="none" stroke="#fff" strokeWidth="1.3" className="ml-[23px] mr-[25px]"><path d="M.7.7h18.600v15.600h-6.500L10 19.300l-2.500-3H.7z" /></svg>
        <div className="h-[51px] w-[6px] border-l border-[#5a6680]" />
      </div>
    </footer>
  );
}

export default function App() {
  return (
    <div className="relative flex h-[1080px] w-[1920px] flex-col overflow-hidden bg-[#22353f] font-['Open_Sans',sans-serif]">
      <div className="flex">
        <TextWindow />
        <ConsoleWindow />
      </div>
      <Taskbar />
      <div className="pointer-events-none absolute left-[1554px] top-[922px] whitespace-nowrap text-[#9a9ea2]/75">
        <div className="h-[36px] text-[24px] leading-[36px] tracking-[0.02px]">Activate Windows</div>
        <div className="text-[17.500px] leading-[23px] tracking-[-0.1px]">Go to Settings to activate Windows.</div>
      </div>
    </div>
  );
}
